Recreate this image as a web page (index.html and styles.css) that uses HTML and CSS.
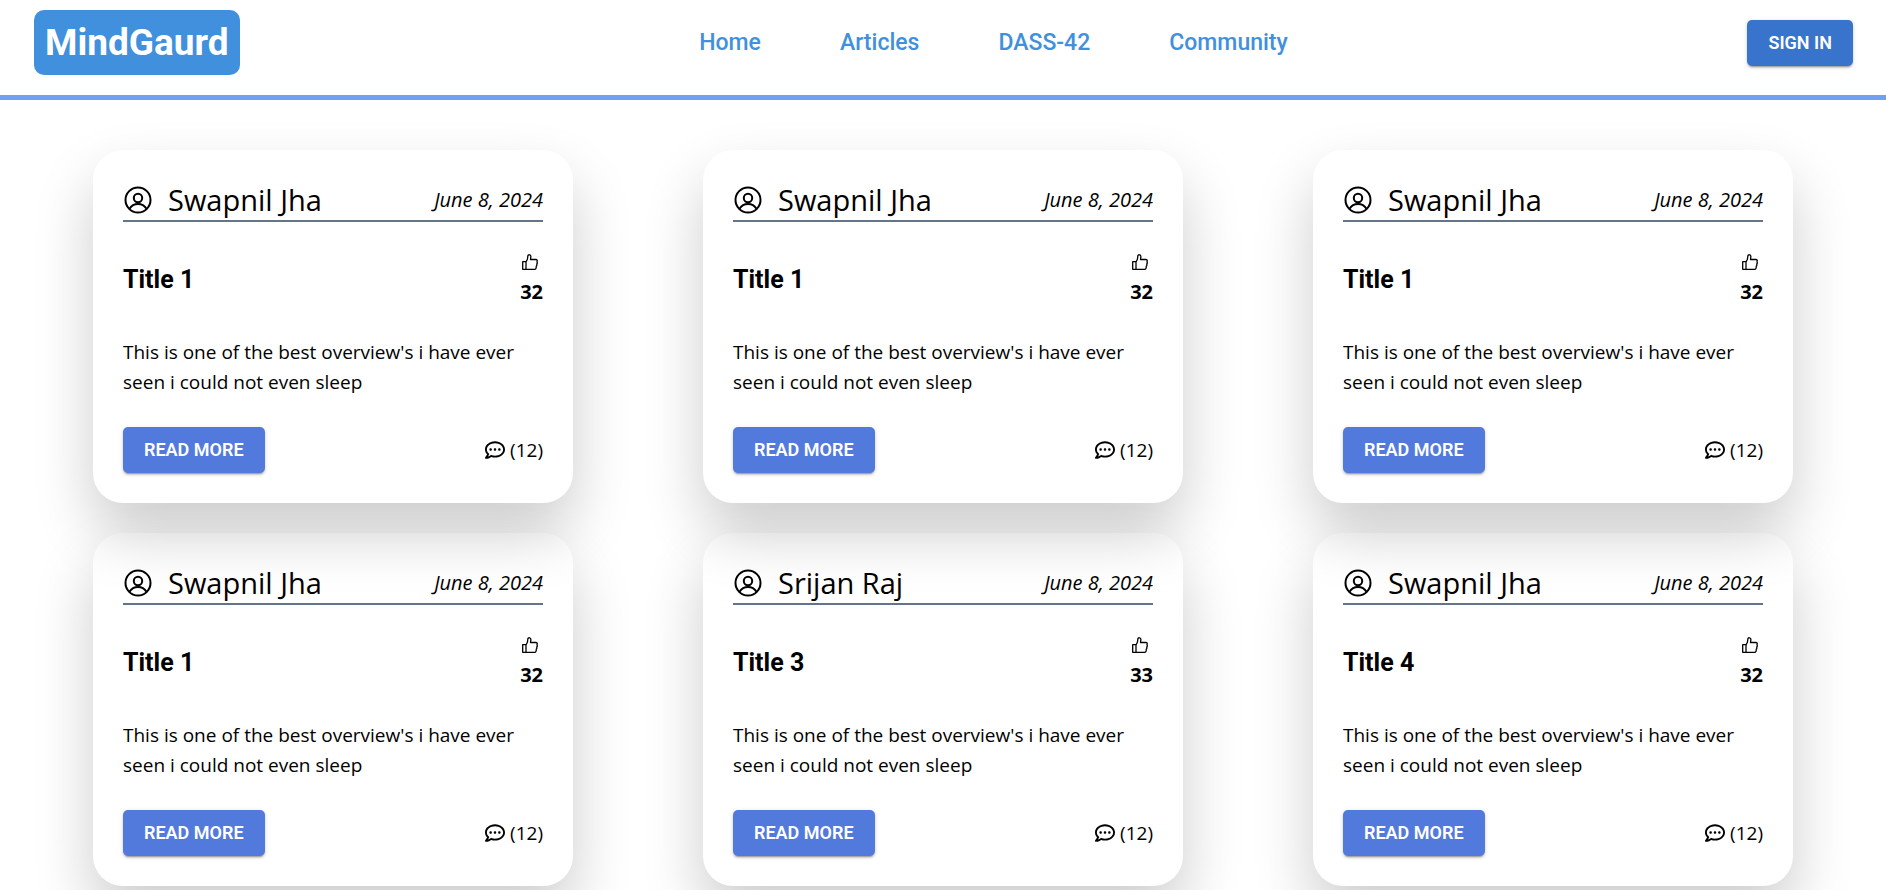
FILE: index.html
```html
<!DOCTYPE html>
<html lang="en">
<head>
<meta charset="utf-8">
<title>MindGaurd</title>
<link rel="stylesheet" href="styles.css">
</head>
<body>
<svg class="sprite" aria-hidden="true">
  <symbol id="user" viewBox="0 0 30 30"><g fill="none" stroke="currentColor" stroke-width="2"><circle cx="15" cy="15" r="12.500"/><circle cx="15" cy="13" r="4.200"/><path d="M6.500 23.800C8.500 20.500 11.500 19 15 19s6.500 1.500 8.500 4.800"/></g></symbol>
  <symbol id="like" viewBox="0 0 16 16"><path fill="none" stroke="currentColor" stroke-width="1.300" stroke-linejoin="round" d="M.7 7.700h3.300v7.600H.7zM4 8l1.400-2.700.5-3.600C6.100.4 8.900.3 8.900 2.400L8.500 5.500h5.300c1.400 0 1.800 1.200 1.200 2.200.5.900.4 1.700-.3 2.300.4.900.2 1.700-.5 2.300.2 1.800-.4 3-1.600 3H4"/></symbol>
  <symbol id="comment" viewBox="0 0 512 512"><path fill="currentColor" d="M144 208c-17.700 0-32 14.300-32 32s14.300 32 32 32 32-14.300 32-32-14.300-32-32-32zm112 0c-17.700 0-32 14.300-32 32s14.300 32 32 32 32-14.300 32-32-14.300-32-32-32zm112 0c-17.700 0-32 14.300-32 32s14.300 32 32 32 32-14.300 32-32-14.300-32-32-32zM256 32C114.600 32 0 125.100 0 240c0 47.600 19.900 91.200 52.900 126.300C38 405.700 7 439.100 6.500 439.500c-6.600 7-8.400 17.200-4.600 26S14.400 480 24 480c61.500 0 110-25.700 139.100-46.300C192 442.800 223.200 448 256 448c141.400 0 256-93.100 256-208S397.400 32 256 32zm0 368c-26.700 0-53.100-4.100-78.400-12.100l-22.700-7.200-19.500 13.800c-14.300 10.100-33.900 21.400-57.500 29 7.300-12.100 14.400-25.700 19.900-40.200l10.600-28.100-20.600-21.800C69.700 314.100 48 282.200 48 240c0-88.200 93.300-160 208-160s208 71.800 208 160-93.300 160-208 160z"/></symbol>
</svg>
<header class="topbar">
  <a class="brand" href="#">MindGaurd</a>
  <nav class="nav">
    <a href="#">Home</a>
    <a href="#">Articles</a>
    <a href="#">DASS-42</a>
    <a href="#">Community</a>
  </nav>
  <button class="btn btn-signin" type="button">SIGN IN</button>
</header>
<main class="articles">
  <article class="card">
    <div class="card-head"><svg class="icon-user"><use href="#user"/></svg><span class="author">Swapnil Jha</span><time class="date">June 8, 2024</time></div>
    <div class="card-title"><h2>Title 1</h2><div class="likes"><svg class="icon-like"><use href="#like"/></svg><span>32</span></div></div>
    <p class="overview">This is one of the best overview's i have ever seen i could not even sleep</p>
    <div class="card-foot"><button class="btn" type="button">READ MORE</button><span class="comments"><svg class="icon-comment"><use href="#comment"/></svg>(12)</span></div>
  </article>
  <article class="card">
    <div class="card-head"><svg class="icon-user"><use href="#user"/></svg><span class="author">Swapnil Jha</span><time class="date">June 8, 2024</time></div>
    <div class="card-title"><h2>Title 1</h2><div class="likes"><svg class="icon-like"><use href="#like"/></svg><span>32</span></div></div>
    <p class="overview">This is one of the best overview's i have ever seen i could not even sleep</p>
    <div class="card-foot"><button class="btn" type="button">READ MORE</button><span class="comments"><svg class="icon-comment"><use href="#comment"/></svg>(12)</span></div>
  </article>
  <article class="card">
    <div class="card-head"><svg class="icon-user"><use href="#user"/></svg><span class="author">Swapnil Jha</span><time class="date">June 8, 2024</time></div>
    <div class="card-title"><h2>Title 1</h2><div class="likes"><svg class="icon-like"><use href="#like"/></svg><span>32</span></div></div>
    <p class="overview">This is one of the best overview's i have ever seen i could not even sleep</p>
    <div class="card-foot"><button class="btn" type="button">READ MORE</button><span class="comments"><svg class="icon-comment"><use href="#comment"/></svg>(12)</span></div>
  </article>
  <article class="card">
    <div class="card-head"><svg class="icon-user"><use href="#user"/></svg><span class="author">Swapnil Jha</span><time class="date">June 8, 2024</time></div>
    <div class="card-title"><h2>Title 1</h2><div class="likes"><svg class="icon-like"><use href="#like"/></svg><span>32</span></div></div>
    <p class="overview">This is one of the best overview's i have ever seen i could not even sleep</p>
    <div class="card-foot"><button class="btn" type="button">READ MORE</button><span class="comments"><svg class="icon-comment"><use href="#comment"/></svg>(12)</span></div>
  </article>
  <article class="card">
    <div class="card-head"><svg class="icon-user"><use href="#user"/></svg><span class="author">Srijan Raj</span><time class="date">June 8, 2024</time></div>
    <div class="card-title"><h2>Title 3</h2><div class="likes"><svg class="icon-like"><use href="#like"/></svg><span>33</span></div></div>
    <p class="overview">This is one of the best overview's i have ever seen i could not even sleep</p>
    <div class="card-foot"><button class="btn" type="button">READ MORE</button><span class="comments"><svg class="icon-comment"><use href="#comment"/></svg>(12)</span></div>
  </article>
  <article class="card">
    <div class="card-head"><svg class="icon-user"><use href="#user"/></svg><span class="author">Swapnil Jha</span><time class="date">June 8, 2024</time></div>
    <div class="card-title"><h2>Title 4</h2><div class="likes"><svg class="icon-like"><use href="#like"/></svg><span>32</span></div></div>
    <p class="overview">This is one of the best overview's i have ever seen i could not even sleep</p>
    <div class="card-foot"><button class="btn" type="button">READ MORE</button><span class="comments"><svg class="icon-comment"><use href="#comment"/></svg>(12)</span></div>
  </article>
</main>
</body>
</html>
```
FILE: styles.css
```css
* { box-sizing: border-box; margin: 0; }
body {
  min-height: 100vh;
  background: #fff;
  color: #000;
  font: 400 19px/30px "Open Sans", "Noto Sans", sans-serif;
}
.sprite { display: none; }
svg { flex: none; }
.topbar {
  display: flex;
  justify-content: space-between;
  align-items: flex-start;
  padding: 10px 33px 20px 34px;
  border-bottom: 5px solid #709ff4;
}
.brand {
  padding: 10px 11px;
  border-radius: 10px;
  background: #4190dd;
  color: #fff;
  font: 700 37px/45px Roboto, sans-serif;
  text-decoration: none;
}
.nav { display: flex; gap: 79px; padding-top: 18px; }
.nav a {
  color: #4190dd;
  font: 500 23px/30px Roboto, sans-serif;
  text-decoration: none;
}
.btn {
  height: 46px;
  padding: 0 21px;
  border: 0;
  border-radius: 5px;
  background: #527add;
  color: #fff;
  font: 600 18px/30px Roboto, sans-serif;
  box-shadow: 0 3px 1px -2px rgba(0,0,0,.2), 0 2px 2px rgba(0,0,0,.14), 0 1px 5px rgba(0,0,0,.12);
}
.btn-signin { margin-top: 10px; background: #3874cb; }
.articles {
  display: grid;
  grid-template-columns: repeat(3, 1fr);
  justify-items: center;
  row-gap: 30px;
  padding: 50px 28px 4px;
}
.card {
  width: 480px;
  padding: 30px;
  border-radius: 30px;
  box-shadow: 0 30px 60px rgba(0,0,0,.2);
}
.card-head {
  display: flex;
  align-items: center;
  height: 42px;
  border-bottom: 2px solid #64748b;
}
.icon-user { width: 30px; height: 30px; }
.author { margin-left: 15px; font-size: 29px; line-height: 40px; }
.date { margin-left: auto; font-size: 20px; font-style: italic; }
.card-title {
  display: flex;
  align-items: center;
  justify-content: space-between;
  margin-top: 25px;
}
.card-title h2 { padding-top: 5px; font: 700 25px/30px Roboto, sans-serif; }
.likes { font-size: 20px; font-weight: 700; }
.likes svg, .likes span { display: block; }
.icon-like { width: 16px; height: 30px; margin-left: 2px; }
.overview { margin: 30px 0; }
.card-foot {
  display: flex;
  align-items: center;
  justify-content: space-between;
}
.comments { display: flex; align-items: center; gap: 5px; }
.icon-comment { width: 20px; height: 20px; }
```
